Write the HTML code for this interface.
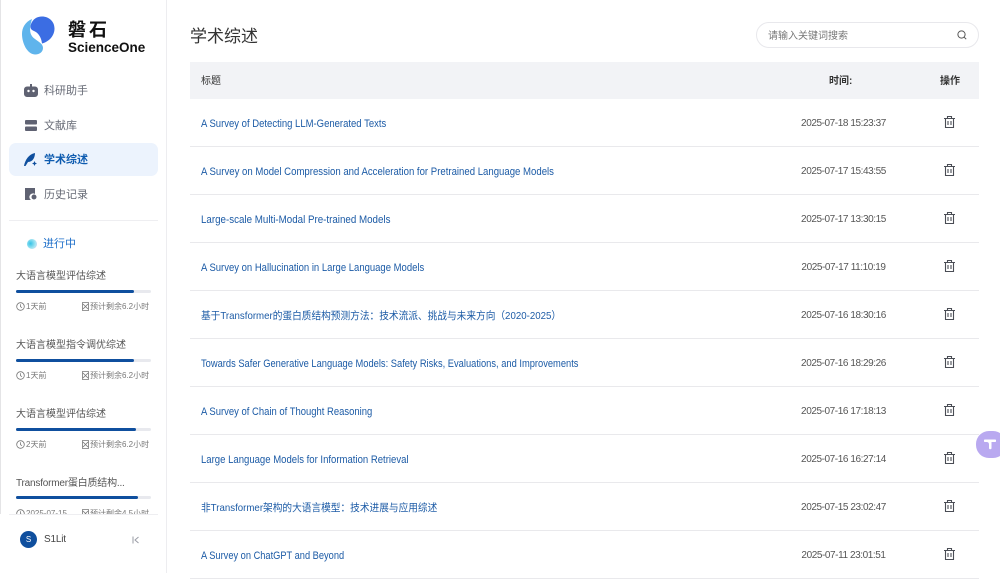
<!DOCTYPE html>
<html><head><meta charset="utf-8"><style>
*{box-sizing:border-box;margin:0;padding:0}
html,body{width:1000px;height:573px;overflow:hidden;background:#fff;font-family:"Liberation Sans","Noto Sans CJK SC",sans-serif;color:#333}
.a{position:absolute;white-space:nowrap}
#side{position:absolute;left:0;top:0;width:167px;height:573px;border-right:1px solid #ededf0;overflow:hidden}
.nav{position:absolute;left:44px;font-size:11px;line-height:16px;color:#666a75}
.task{position:absolute;left:16px;font-size:10px;line-height:14px;color:#555}
.bar{position:absolute;left:16px;width:135px;height:3px;background:#e8e9ee;border-radius:2px}
.bar i{display:block;height:3px;background:#0f4f9e;border-radius:2px}
.m{position:absolute;font-size:8px;line-height:12px;color:#777;white-space:nowrap}
.row{position:absolute;left:190px;width:789px;height:48px;border-bottom:1px solid #e9e9ec}
.row b{position:absolute;left:11px;top:18px;font-weight:400;font-size:11px;line-height:14px;color:#1c5ba6;white-space:nowrap;transform:scaleX(.855);transform-origin:0 50%}
.row b.c{font-size:10.5px;transform:scaleX(.922)}
.row s{position:absolute;left:590px;width:127px;top:18px;text-align:center;text-decoration:none;font-size:10px;letter-spacing:-.42px;line-height:14px;color:#555;white-space:nowrap}
.row svg{position:absolute;left:754px;top:17px}
</style></head><body>
<div class="a" style="left:0;top:0;width:1px;height:573px;background:#e4e4e6"></div>
<div id="side">
<svg class="a" style="left:22px;top:16px" width="34" height="39" viewBox="0 0 34 39"><path d="M10 3C3 6 0 12 0 18c0 9 5 20 13 20.500 5 0 8-3 8-6.500 0-4-4-6-8-9-4-3-7-7-3-20z" fill="#5fb4ec"/><path d="M9 8C11 3 15 .5 20 .5c7 0 12.500 5 12.500 12 0 7-5 13-12.500 15-.5-5-3-10-7-12-2-1-6-2-4-7.500z" fill="#3b6de3"/></svg>
<div class="a" style="left:68px;top:19px;font-size:18px;line-height:23px;font-weight:700;color:#111;letter-spacing:3px">磐石</div>
<div class="a" style="left:68px;top:40px;font-size:13.5px;line-height:16px;font-weight:700;color:#111">ScienceOne</div>
<div class="a" style="left:9px;top:143px;width:149px;height:33px;background:#ecf3fd;border-radius:7px"></div>
<svg class="a" style="left:24px;top:84px" width="14" height="13" viewBox="0 0 14 13"><path d="M6 0h2v2.500h3a3 3 0 0 1 3 3V10a3 3 0 0 1-3 3H3a3 3 0 0 1-3-3V5.500a3 3 0 0 1 3-3h3z" fill="#5f6272"/><circle cx="4.500" cy="7" r="1.200" fill="#fff"/><circle cx="9.500" cy="7" r="1.200" fill="#fff"/></svg>
<div class="nav" style="top:83px">科研助手</div>
<svg class="a" style="left:25px;top:120px" width="12" height="11" viewBox="0 0 12 11"><rect width="12" height="4.500" rx="1" fill="#5f6272"/><rect y="6.500" width="12" height="4.500" rx="1" fill="#5f6272"/></svg>
<div class="nav" style="top:118px">文献库</div>
<svg class="a" style="left:24px;top:153px" width="14" height="13" viewBox="0 0 14 13"><path d="M0 13C1 7 5 1 11 0 11 4 9 9 4 9L1.500 13z" fill="#0f4f9e"/><path d="M10.500 8l.8 1.700 1.700.8-1.700.8-.8 1.700-.8-1.700-1.700-.8 1.700-.8z" fill="#0f4f9e"/></svg>
<div class="nav" style="top:152px;color:#0f5cb0;font-weight:700">学术综述</div>
<svg class="a" style="left:25px;top:188px" width="12" height="12" viewBox="0 0 12 12"><path d="M0 0h10v6a3.500 3.500 0 0 0-4 6H0z" fill="#5f6272"/><circle cx="9" cy="9" r="2.500" fill="#5f6272"/></svg>
<div class="nav" style="top:187px">历史记录</div>
<div class="a" style="left:9px;top:220px;width:149px;height:1px;background:#eeeef1"></div>
<div class="a" style="left:27px;top:239px;width:10px;height:10px;border-radius:50%;background:radial-gradient(circle at 35% 45%,#36c3e8,#a8e6f2 60%,#d9c4f5)"></div>
<div class="a" style="left:43px;top:236px;font-size:11px;line-height:16px;color:#1c6ec9">进行中</div>
<div class="task" style="top:270px">大语言模型评估综述</div>
<div class="bar" style="top:290px"><i style="width:118px"></i></div>
<div class="m" style="left:26px;top:301px">1天前</div><div class="m" style="left:90px;top:301px">预计剩余6.2小时</div>
<div class="task" style="top:339px">大语言模型指令调优综述</div>
<div class="bar" style="top:359px"><i style="width:118px"></i></div>
<div class="m" style="left:26px;top:370px">1天前</div><div class="m" style="left:90px;top:370px">预计剩余6.2小时</div>
<div class="task" style="top:408px">大语言模型评估综述</div>
<div class="bar" style="top:428px"><i style="width:120px"></i></div>
<div class="m" style="left:26px;top:439px">2天前</div><div class="m" style="left:90px;top:439px">预计剩余6.2小时</div>
<div class="task" style="top:477px;letter-spacing:-.2px">Transformer蛋白质结构...</div>
<div class="bar" style="top:496px"><i style="width:122px"></i></div>
<div class="m" style="left:26px;top:508px">2025-07-15</div><div class="m" style="left:90px;top:508px">预计剩余4.5小时</div>
<svg class="a" style="left:16px;top:302px" width="9" height="9" viewBox="0 0 9 9" fill="none" stroke="#777" stroke-width=".8"><circle cx="4.500" cy="4.500" r="3.800"/><path d="M4.500 2.200v2.500l1.500 1"/></svg>
<svg class="a" style="left:16px;top:371px" width="9" height="9" viewBox="0 0 9 9" fill="none" stroke="#777" stroke-width=".8"><circle cx="4.500" cy="4.500" r="3.800"/><path d="M4.500 2.200v2.500l1.500 1"/></svg>
<svg class="a" style="left:16px;top:440px" width="9" height="9" viewBox="0 0 9 9" fill="none" stroke="#777" stroke-width=".8"><circle cx="4.500" cy="4.500" r="3.800"/><path d="M4.500 2.200v2.500l1.500 1"/></svg>
<svg class="a" style="left:16px;top:509px" width="9" height="9" viewBox="0 0 9 9" fill="none" stroke="#777" stroke-width=".8"><circle cx="4.500" cy="4.500" r="3.800"/><path d="M4.500 2.200v2.500l1.500 1"/></svg>
<svg class="a" style="left:82px;top:302px" width="7" height="9" viewBox="0 0 7 9" fill="none" stroke="#777" stroke-width=".8"><path d="M.5.500h6v8h-6zM1 2l5 5M6 2 1 7"/></svg>
<svg class="a" style="left:82px;top:371px" width="7" height="9" viewBox="0 0 7 9" fill="none" stroke="#777" stroke-width=".8"><path d="M.5.500h6v8h-6zM1 2l5 5M6 2 1 7"/></svg>
<svg class="a" style="left:82px;top:440px" width="7" height="9" viewBox="0 0 7 9" fill="none" stroke="#777" stroke-width=".8"><path d="M.5.500h6v8h-6zM1 2l5 5M6 2 1 7"/></svg>
<svg class="a" style="left:82px;top:509px" width="7" height="9" viewBox="0 0 7 9" fill="none" stroke="#777" stroke-width=".8"><path d="M.5.500h6v8h-6zM1 2l5 5M6 2 1 7"/></svg>
<div class="a" style="left:0;top:514px;width:166px;height:59px;background:#fff"></div>
<div class="a" style="left:9px;top:514px;width:149px;height:1px;background:#eeeef1"></div>
<div class="a" style="left:20px;top:531px;width:17px;height:17px;border-radius:50%;background:#0f4f9e;color:#fff;font-size:8px;line-height:17px;text-align:center">S</div>
<div class="a" style="left:44px;top:533px;font-size:10px;letter-spacing:-.2px;line-height:14px;color:#444">S1Lit</div>
<svg class="a" style="left:132px;top:536px" width="8" height="8" viewBox="0 0 8 8" fill="none" stroke="#9a9ca6" stroke-width="1"><path d="M1 .5v7M6.500 1 3 4l3.500 3"/></svg>
</div>
<div class="a" style="left:190px;top:25px;font-size:17px;line-height:23px;color:#333">学术综述</div>
<div class="a" style="left:756px;top:22px;width:223px;height:26px;border:1px solid #e8e8ec;border-radius:13px"></div>
<div class="a" style="left:768px;top:30px;font-size:10px;line-height:14px;color:#777">请输入关键词搜索</div>
<svg class="a" style="left:957px;top:30px" width="10" height="10" viewBox="0 0 10 10" fill="none" stroke="#555" stroke-width="1"><circle cx="4.500" cy="4.500" r="3.600"/><path d="M7.200 7.200 9.200 9.200"/></svg>
<div class="a" style="left:190px;top:62px;width:789px;height:37px;background:#f2f3f6"></div>
<div class="a" style="left:201px;top:75px;font-size:10px;line-height:14px;color:#333">标题</div>
<div class="a" style="left:829px;top:75px;font-size:10px;line-height:14px;color:#333;font-weight:700">时间:</div>
<div class="a" style="left:940px;top:75px;font-size:10px;line-height:14px;color:#333;font-weight:700">操作</div>
<div class="row" style="top:99px"><b style="transform:scaleX(.864)">A Survey of Detecting LLM-Generated Texts</b><s>2025-07-18 15:23:37</s><svg width="11" height="12" viewBox="0 0 11 12" fill="none" stroke="#4a4d55" stroke-width="1.100"><path d="M0 2.500h11M3.500 2.500V.5h4v2M1.500 2.500v9h8v-9M4 5v4M7 5v4"/></svg></div>
<div class="row" style="top:147px"><b style="transform:scaleX(.872)">A Survey on Model Compression and Acceleration for Pretrained Language Models</b><s>2025-07-17 15:43:55</s><svg width="11" height="12" viewBox="0 0 11 12" fill="none" stroke="#4a4d55" stroke-width="1.100"><path d="M0 2.500h11M3.500 2.500V.5h4v2M1.500 2.500v9h8v-9M4 5v4M7 5v4"/></svg></div>
<div class="row" style="top:195px"><b style="transform:scaleX(.888)">Large-scale Multi-Modal Pre-trained Models</b><s>2025-07-17 13:30:15</s><svg width="11" height="12" viewBox="0 0 11 12" fill="none" stroke="#4a4d55" stroke-width="1.100"><path d="M0 2.500h11M3.500 2.500V.5h4v2M1.500 2.500v9h8v-9M4 5v4M7 5v4"/></svg></div>
<div class="row" style="top:243px"><b style="transform:scaleX(.863)">A Survey on Hallucination in Large Language Models</b><s>2025-07-17 11:10:19</s><svg width="11" height="12" viewBox="0 0 11 12" fill="none" stroke="#4a4d55" stroke-width="1.100"><path d="M0 2.500h11M3.500 2.500V.5h4v2M1.500 2.500v9h8v-9M4 5v4M7 5v4"/></svg></div>
<div class="row" style="top:291px"><b class="c">基于Transformer的蛋白质结构预测方法：技术流派、挑战与未来方向（2020-2025）</b><s>2025-07-16 18:30:16</s><svg width="11" height="12" viewBox="0 0 11 12" fill="none" stroke="#4a4d55" stroke-width="1.100"><path d="M0 2.500h11M3.500 2.500V.5h4v2M1.500 2.500v9h8v-9M4 5v4M7 5v4"/></svg></div>
<div class="row" style="top:339px"><b style="transform:scaleX(.848)">Towards Safer Generative Language Models: Safety Risks, Evaluations, and Improvements</b><s>2025-07-16 18:29:26</s><svg width="11" height="12" viewBox="0 0 11 12" fill="none" stroke="#4a4d55" stroke-width="1.100"><path d="M0 2.500h11M3.500 2.500V.5h4v2M1.500 2.500v9h8v-9M4 5v4M7 5v4"/></svg></div>
<div class="row" style="top:387px"><b style="transform:scaleX(.86)">A Survey of Chain of Thought Reasoning</b><s>2025-07-16 17:18:13</s><svg width="11" height="12" viewBox="0 0 11 12" fill="none" stroke="#4a4d55" stroke-width="1.100"><path d="M0 2.500h11M3.500 2.500V.5h4v2M1.500 2.500v9h8v-9M4 5v4M7 5v4"/></svg></div>
<div class="row" style="top:435px"><b style="transform:scaleX(.868)">Large Language Models for Information Retrieval</b><s>2025-07-16 16:27:14</s><svg width="11" height="12" viewBox="0 0 11 12" fill="none" stroke="#4a4d55" stroke-width="1.100"><path d="M0 2.500h11M3.500 2.500V.5h4v2M1.500 2.500v9h8v-9M4 5v4M7 5v4"/></svg></div>
<div class="row" style="top:483px"><b class="c">非Transformer架构的大语言模型：技术进展与应用综述</b><s>2025-07-15 23:02:47</s><svg width="11" height="12" viewBox="0 0 11 12" fill="none" stroke="#4a4d55" stroke-width="1.100"><path d="M0 2.500h11M3.500 2.500V.5h4v2M1.500 2.500v9h8v-9M4 5v4M7 5v4"/></svg></div>
<div class="row" style="top:531px"><b style="transform:scaleX(.843)">A Survey on ChatGPT and Beyond</b><s>2025-07-11 23:01:51</s><svg width="11" height="12" viewBox="0 0 11 12" fill="none" stroke="#4a4d55" stroke-width="1.100"><path d="M0 2.500h11M3.500 2.500V.5h4v2M1.500 2.500v9h8v-9M4 5v4M7 5v4"/></svg></div>
<div class="a" style="left:976px;top:431px;width:30px;height:27px;border-radius:13px;background:#b9a9f0"></div>
<svg class="a" style="left:984px;top:438px" width="12" height="12" viewBox="0 0 12 12" fill="#fff"><path d="M1 1.500h10a1 1 0 0 1 0 2.500H7.500v6a1.200 1.200 0 0 1-2.500 0V6.500a2.500 2.500 0 0 0-2-2.500H1a1.250 1.250 0 0 1 0-2.500z"/></svg>
</body></html>
